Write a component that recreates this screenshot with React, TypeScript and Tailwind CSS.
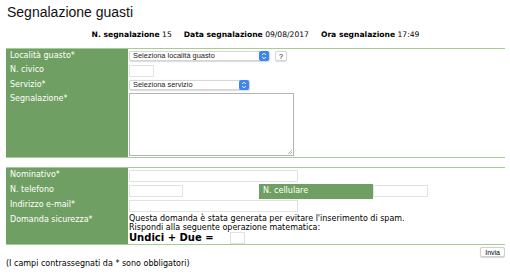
import React from "react";

const GREEN = "bg-[#6f9f62]";
const ARIAL = "font-['Liberation_Sans',Arial,sans-serif]";

function Stepper() {
  return (
    <span className="flex h-[10px] w-[10px] items-center justify-center rounded-[2px] bg-[#3d86f0]">
      <svg width="6" height="8" viewBox="0 0 6 8" fill="none">
        <path d="M1.2 3 L3 1.2 L4.8 3" stroke="white" strokeWidth="1" />
        <path d="M1.2 5 L3 6.8 L4.8 5" stroke="white" strokeWidth="1" />
      </svg>
    </span>
  );
}

function Select({ label, width }: { label: string; width: string }) {
  return (
    <div
      className={`flex h-[10px] ${width} items-center justify-between rounded-[2px] border border-[#d6d6d6] bg-white pl-[3px] shadow-[0_0.5px_1px_rgba(0,0,0,0.15)]`}
    >
      <span className={`${ARIAL} text-[7.4px] leading-none text-[#222]`}>{label}</span>
      <Stepper />
    </div>
  );
}

function Input({ width }: { width: string }) {
  return <div className={`h-[12px] ${width} border border-[#e2e2e2] bg-white`} />;
}

function Label({ children }: { children: React.ReactNode }) {
  return (
    <div className={`w-[122px] shrink-0 ${GREEN} pl-[4px] text-[8px] text-white`}>{children}</div>
  );
}

export default function App() {
  return (
    <div className="h-[277px] w-[510px] bg-white pl-[6px] pr-[5px] font-['DejaVu_Sans',Verdana,sans-serif] text-[8px] text-black">
      <h1 className={`pl-[1px] pt-[3px] ${ARIAL} text-[14px] leading-[18px] text-[#111]`}>
        Segnalazione guasti
      </h1>

      {/* Header info */}
      <div className="mt-[9px] flex justify-center gap-[12px] text-[7.6px] leading-[10px]">
        <span>
          <b>N. segnalazione</b> 15
        </span>
        <span>
          <b>Data segnalazione</b> 09/08/2017
        </span>
        <span>
          <b>Ora segnalazione</b> 17:49
        </span>
      </div>

      {/* Table 1 */}
      <div className="mt-[8px] border-y border-[#a6cc98] leading-[14px]">
        <div className="flex h-[14px]">
          <Label>Località guasto*</Label>
          <div className="flex items-center gap-[5px] pl-[1px]">
            <Select label="Seleziona località guasto" width="w-[141px]" />
            <span
              className={`flex h-[10px] w-[12px] items-center justify-center rounded-[2px] border border-[#d6d6d6] bg-white ${ARIAL} text-[7px] leading-none shadow-[0_0.5px_1px_rgba(0,0,0,0.15)]`}
            >
              ?
            </span>
          </div>
        </div>
        <div className="flex h-[15px]">
          <Label>N. civico</Label>
          <div className="flex items-center pl-[1px]">
            <Input width="w-[25px]" />
          </div>
        </div>
        <div className="flex h-[14px]">
          <Label>Servizio*</Label>
          <div className="flex items-center pl-[1px]">
            <Select label="Seleziona servizio" width="w-[121px]" />
          </div>
        </div>
        <div className="flex h-[65px]">
          <Label>Segnalazione*</Label>
          <div className="pl-[1px] pt-[1px]">
            <div className="relative h-[63px] w-[165px] border border-[#b4b4b4] bg-white">
              <svg className="absolute bottom-[1px] right-[1px]" width="5" height="5" viewBox="0 0 5 5">
                <path d="M1 5 L5 1 M3 5 L5 3" stroke="#999" strokeWidth="0.7" />
              </svg>
            </div>
          </div>
        </div>
      </div>

      {/* Table 2 */}
      <div className="mt-[9px] border-y border-[#a6cc98] leading-[14px]">
        <div className="flex h-[15px]">
          <Label>Nominativo*</Label>
          <div className="flex items-center pl-[1px]">
            <Input width="w-[169px]" />
          </div>
        </div>
        <div className="flex h-[15px]">
          <Label>N. telefono</Label>
          <div className="flex w-[131px] items-center pl-[1px]">
            <Input width="w-[54px]" />
          </div>
          <div className={`mt-[1px] h-[15px] w-[114px] ${GREEN} pl-[4px] text-white`}>N. cellulare</div>
          <div className="flex items-center">
            <Input width="w-[55px]" />
          </div>
        </div>
        <div className="flex h-[15px]">
          <Label>Indirizzo e-mail*</Label>
          <div className="flex items-center pl-[1px]">
            <Input width="w-[169px]" />
          </div>
        </div>
        <div className="flex h-[31px]">
          <Label>Domanda sicurezza*</Label>
          <div className="pl-[1px] pt-[1px] leading-[9px]">
            <div>Questa domanda è stata generata per evitare l'inserimento di spam.</div>
            <div>Rispondi alla seguente operazione matematica:</div>
            <div className="flex items-center gap-[16px] text-[10px] font-bold leading-[12px]">
              Undici + Due =
              <span className="h-[12px] w-[15px] border border-[#e2e2e2] bg-white" />
            </div>
          </div>
        </div>
      </div>

      <div className="mt-[2px] flex justify-end">
        <button
          className={`h-[10px] rounded-[2px] border border-[#d0d0d0] bg-white px-[4px] ${ARIAL} text-[7px] leading-none shadow-[0_0.5px_1px_rgba(0,0,0,0.15)]`}
        >
          Invia
        </button>
      </div>

      <p className="mt-[2px] leading-[10px]">(I campi contrassegnati da * sono obbligatori)</p>
    </div>
  );
}
